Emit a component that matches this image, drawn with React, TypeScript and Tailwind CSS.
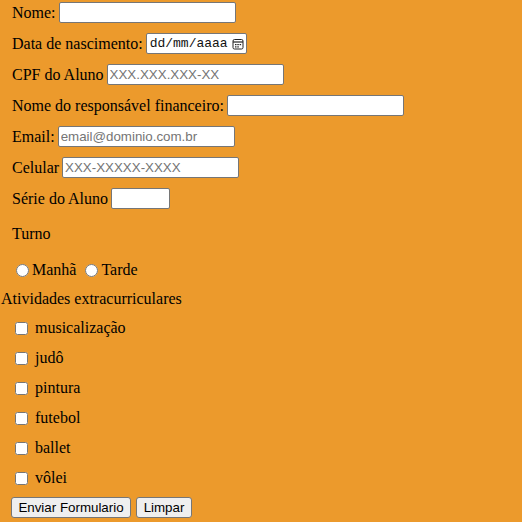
const textInput =
  "ml-[-1px] h-[21px] w-[177px] border border-[#767676] rounded-[2px] bg-white px-[2px] text-[13.33px] font-['Liberation_Sans',Arial,sans-serif] placeholder:text-[#757575] outline-none";

const atividades = ["musicalização", "judô", "pintura", "futebol", "ballet", "vôlei"];

function Row({ children }: { children: React.ReactNode }) {
  return <div className="flex h-[21px] items-center pl-[12px] mb-[10px] whitespace-pre">{children}</div>;
}

function CalendarIcon() {
  return (
    <svg width="12" height="12" viewBox="0 0 12 12" className="ml-[4px]">
      <rect x="1" y="1.5" width="10" height="9.5" rx="1.5" fill="none" stroke="#222" strokeWidth="1" />
      <line x1="1" y1="4" x2="11" y2="4" stroke="#222" strokeWidth="1.2" />
      <rect x="3" y="6" width="1.5" height="1.2" fill="#222" />
      <rect x="5.3" y="6" width="1.5" height="1.2" fill="#222" />
      <rect x="7.6" y="6" width="1.5" height="1.2" fill="#222" />
      <rect x="3" y="8.3" width="1.5" height="1.2" fill="#222" />
      <rect x="5.3" y="8.3" width="1.5" height="1.2" fill="#222" />
    </svg>
  );
}

export default function App() {
  return (
    <div className="w-[522px] h-[522px] bg-[#ec9a2c] text-black text-[16px] font-['Liberation_Serif','Times_New_Roman',serif] pt-[2px] overflow-hidden">
      <Row>
        Nome: <input type="text" className={textInput} />
      </Row>
      <Row>
        Data de nascimento:{" "}
        <div className="ml-[-1px] flex h-[21px] w-[101px] items-center border border-[#767676] rounded-[2px] bg-white pl-[3px] text-[13px] font-['Liberation_Mono',monospace] text-[#111]">
          dd/mm/aaaa
          <CalendarIcon />
        </div>
      </Row>
      <Row>
        CPF do Aluno <input type="text" placeholder="XXX.XXX.XXX-XX" className={textInput} />
      </Row>
      <Row>
        Nome do responsável financeiro: <input type="text" className={textInput} />
      </Row>
      <Row>
        Email: <input type="email" placeholder="email@dominio.com.br" className={textInput} />
      </Row>
      <Row>
        Celular <input type="text" placeholder="XXX-XXXXX-XXXX" className={textInput} />
      </Row>
      <Row>
        Série do Aluno{" "}
        <input type="text" className="ml-[-1px] h-[21px] w-[59px] border border-[#767676] rounded-[2px] bg-white outline-none" />
      </Row>

      <div className="pl-[12px] mt-[16px] leading-[18px]">Turno</div>

      <div className="flex items-center pl-[12px] mt-[18px] h-[18px] leading-[18px]">
        <input type="radio" name="turno" className="ml-[4px] mr-[3px] w-[13px] h-[13px]" />
        Manhã
        <input type="radio" name="turno" className="ml-[9px] mr-[3px] w-[13px] h-[13px]" />
        Tarde
      </div>

      <div className="pl-[1px] mt-[11px] leading-[18px]">Atividades extracurriculares</div>

      <div className="flex flex-col pl-[15px] mt-[5px]">
        {atividades.map((a) => (
          <label key={a} className="flex items-center h-[30px] leading-[18px]">
            <input type="checkbox" className="w-[13px] h-[13px] mr-[7px]" />
            {a}
          </label>
        ))}
      </div>

      <div className="flex gap-[5px] pl-[11px] mt-[4px] font-['Liberation_Sans',Arial,sans-serif] text-[13.33px]">
        <button className="h-[21px] w-[120px] bg-[#efefef] border border-[#767676] rounded-[3px]">Enviar Formulario</button>
        <button className="h-[21px] w-[56px] bg-[#efefef] border border-[#767676] rounded-[3px]">Limpar</button>
      </div>
    </div>
  );
}
